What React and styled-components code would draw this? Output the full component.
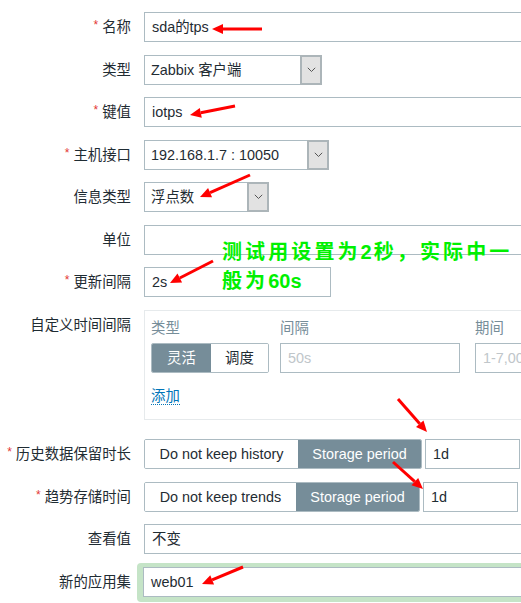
import React from 'react';
import styled, { createGlobalStyle } from 'styled-components';

const GlobalStyle = createGlobalStyle`
  html, body {
    margin: 0;
    padding: 0;
    background: #fff;
    overflow: hidden;
  }
  body {
    font-family: "Liberation Sans", "Noto Sans CJK SC", sans-serif;
    font-size: 14.4px;
    color: #1f2c33;
  }
`;

const Page = styled.div`
  position: relative;
  width: 521px;
  height: 603px;
  overflow: hidden;
`;

const Form = styled.div`
  display: flex;
  flex-direction: column;
  gap: 12.5px;
  padding-top: 12px;
`;

const Row = styled.div`
  display: grid;
  grid-template-columns: 131px 1fr;
  column-gap: 13px;
  align-items: start;
  margin-top: ${(p) => p.$extraTop || 0}px;
`;

const Label = styled.div`
  height: 30px;
  text-align: right;
  line-height: 30px;
  white-space: nowrap;
`;

const Star = styled.span`
  color: #e33734;
  font-size: 12px;
  position: relative;
  top: -3px;
  margin-right: 4px;
`;

const Input = styled.div`
  box-sizing: border-box;
  width: ${(p) => p.$w || 460}px;
  height: 30px;
  border: 1px solid #acbbc2;
  background: #fff;
  padding: 0 7px;
  line-height: 28px;
  white-space: nowrap;
  overflow: hidden;
  color: ${(p) => (p.$placeholder ? '#c0c6ca' : '#1f2c33')};
`;

const SelectBox = styled.div`
  box-sizing: border-box;
  display: flex;
  width: ${(p) => p.$w}px;
  height: 30px;
  border: 1px solid #acbbc2;
  background: #fff;
`;

const SelectText = styled.span`
  flex: 1;
  padding-left: 6px;
  line-height: 28px;
  white-space: nowrap;
  overflow: hidden;
`;

const SelectArrow = styled.span`
  box-sizing: border-box;
  width: 22px;
  margin: -1px -1px -1px 0;
  background: #e2e2e2;
  border: 2px solid #acb5b9;
  display: flex;
  align-items: center;
  justify-content: center;
`;

const Chevron = () => (
  <svg width="9" height="6" viewBox="0 0 9 6">
    <path d="M0.8 0.8 L4.5 4.5 L8.2 0.8" fill="none" stroke="#555" strokeWidth="1" />
  </svg>
);

const Select = ({ w, children }) => (
  <SelectBox $w={w}>
    <SelectText>{children}</SelectText>
    <SelectArrow>
      <Chevron />
    </SelectArrow>
  </SelectBox>
);

const IntervalBox = styled.div`
  box-sizing: border-box;
  width: 460px;
  height: 110px;
  border: 1px solid #e6eaec;
  padding: 5px 0 0 6px;
  display: grid;
  grid-template-columns: 129px 195px 200px;
  grid-template-rows: 24px 33px 1fr;
  align-items: end;
`;

const ColHead = styled.div`
  height: 24px;
  color: #768d99;
  line-height: 24px;
  align-self: start;
`;

const Segmented = styled.div`
  box-sizing: border-box;
  display: flex;
  height: 30px;
  border: 1px solid #acbbc2;
  border-radius: 2px;
  overflow: hidden;
  width: max-content;
`;

const Segment = styled.div`
  box-sizing: border-box;
  width: ${(p) => p.$w}px;
  text-align: center;
  line-height: 28px;
  white-space: nowrap;
  background: ${(p) => (p.$on ? '#768d99' : '#fff')};
  color: ${(p) => (p.$on ? '#fff' : '#1f2c33')};
`;

const AddLink = styled.div`
  grid-column: 1 / span 3;
  align-self: start;
  margin-top: 13px;
  height: 20px;
  color: #0275b8;
  line-height: 20px;
  span {
    border-bottom: 1px dotted #0275b8;
  }
`;

const Inline = styled.div`
  display: flex;
  gap: 3px;
`;

const Highlight = styled.div`
  margin: -4px 0 -5px -7px;
  padding: 4px 0 5px 6px;
  background: #c5e4c7;
  border-radius: 4px;
`;

const Note = styled.div`
  position: absolute;
  left: 222px;
  top: 237px;
  color: #00f000;
  font-family: "Noto Sans CJK SC", sans-serif;
  font-weight: 700;
  font-size: 20px;
  letter-spacing: 3.1px;
  line-height: 28px;
  white-space: nowrap;
  pointer-events: none;
`;

const Latin = styled.span`
  font-family: "Liberation Sans", sans-serif;
  letter-spacing: 0;
  margin-right: 2px;
`;

const Marks = styled.svg`
  position: absolute;
  left: 0;
  top: 0;
  pointer-events: none;
`;

const arrows = [
  [262, 29, 212, 29],
  [235, 106, 190, 115],
  [250, 175, 200, 197],
  [213, 261, 170, 283],
  [398, 399, 427, 432],
  [393, 462, 423, 489],
  [243, 567, 202, 584],
];

const Arrow = ({ a }) => {
  const [x1, y1, x2, y2] = a;
  const dx = x2 - x1;
  const dy = y2 - y1;
  const len = Math.hypot(dx, dy);
  const ux = dx / len;
  const uy = dy / len;
  const bx = x2 - ux * 11;
  const by = y2 - uy * 11;
  const px = -uy * 5;
  const py = ux * 5;
  return (
    <g>
      <line x1={x1} y1={y1} x2={bx} y2={by} stroke="#f00" strokeWidth="3" />
      <polygon points={`${x2},${y2} ${bx + px},${by + py} ${bx - px},${by - py}`} fill="#f00" />
    </g>
  );
};

export default function App() {
  return (
    <Page>
      <GlobalStyle />
      <Form>
        <Row>
          <Label><Star>*</Star>名称</Label>
          <Input>sda的tps</Input>
        </Row>
        <Row>
          <Label>类型</Label>
          <Select w={178}>Zabbix 客户端</Select>
        </Row>
        <Row>
          <Label><Star>*</Star>键值</Label>
          <Input>iotps</Input>
        </Row>
        <Row>
          <Label><Star>*</Star>主机接口</Label>
          <Select w={185}>192.168.1.7 : 10050</Select>
        </Row>
        <Row>
          <Label>信息类型</Label>
          <Select w={125}>浮点数</Select>
        </Row>
        <Row>
          <Label>单位</Label>
          <Input />
        </Row>
        <Row>
          <Label><Star>*</Star>更新间隔</Label>
          <Input $w={187}>2s</Input>
        </Row>
        <Row>
          <Label>自定义时间间隔</Label>
          <IntervalBox>
            <ColHead>类型</ColHead>
            <ColHead>间隔</ColHead>
            <ColHead>期间</ColHead>
            <Segmented>
              <Segment $w={59} $on>灵活</Segment>
              <Segment $w={57}>调度</Segment>
            </Segmented>
            <Input $w={180} $placeholder>50s</Input>
            <Input $w={200} $placeholder>1-7,00:00-24:00</Input>
            <AddLink><span>添加</span></AddLink>
          </IntervalBox>
        </Row>
        <Row $extraTop={7}>
          <Label><Star>*</Star>历史数据保留时长</Label>
          <Inline>
            <Segmented>
              <Segment $w={153}>Do not keep history</Segment>
              <Segment $w={123} $on>Storage period</Segment>
            </Segmented>
            <Input $w={95}>1d</Input>
          </Inline>
        </Row>
        <Row>
          <Label><Star>*</Star>趋势存储时间</Label>
          <Inline>
            <Segmented>
              <Segment $w={151}>Do not keep trends</Segment>
              <Segment $w={123} $on>Storage period</Segment>
            </Segmented>
            <Input $w={95}>1d</Input>
          </Inline>
        </Row>
        <Row>
          <Label>查看值</Label>
          <Input>不变</Input>
        </Row>
        <Row>
          <Label>新的应用集</Label>
          <Highlight>
            <Input>web01</Input>
          </Highlight>
        </Row>
      </Form>
      <Note>
        测试用设置为<Latin>2</Latin>秒，实际中一
        <br />
        般为<Latin>60s</Latin>
      </Note>
      <Marks width="521" height="603" viewBox="0 0 521 603">
        {arrows.map((a, i) => (
          <Arrow key={i} a={a} />
        ))}
      </Marks>
    </Page>
  );
}
